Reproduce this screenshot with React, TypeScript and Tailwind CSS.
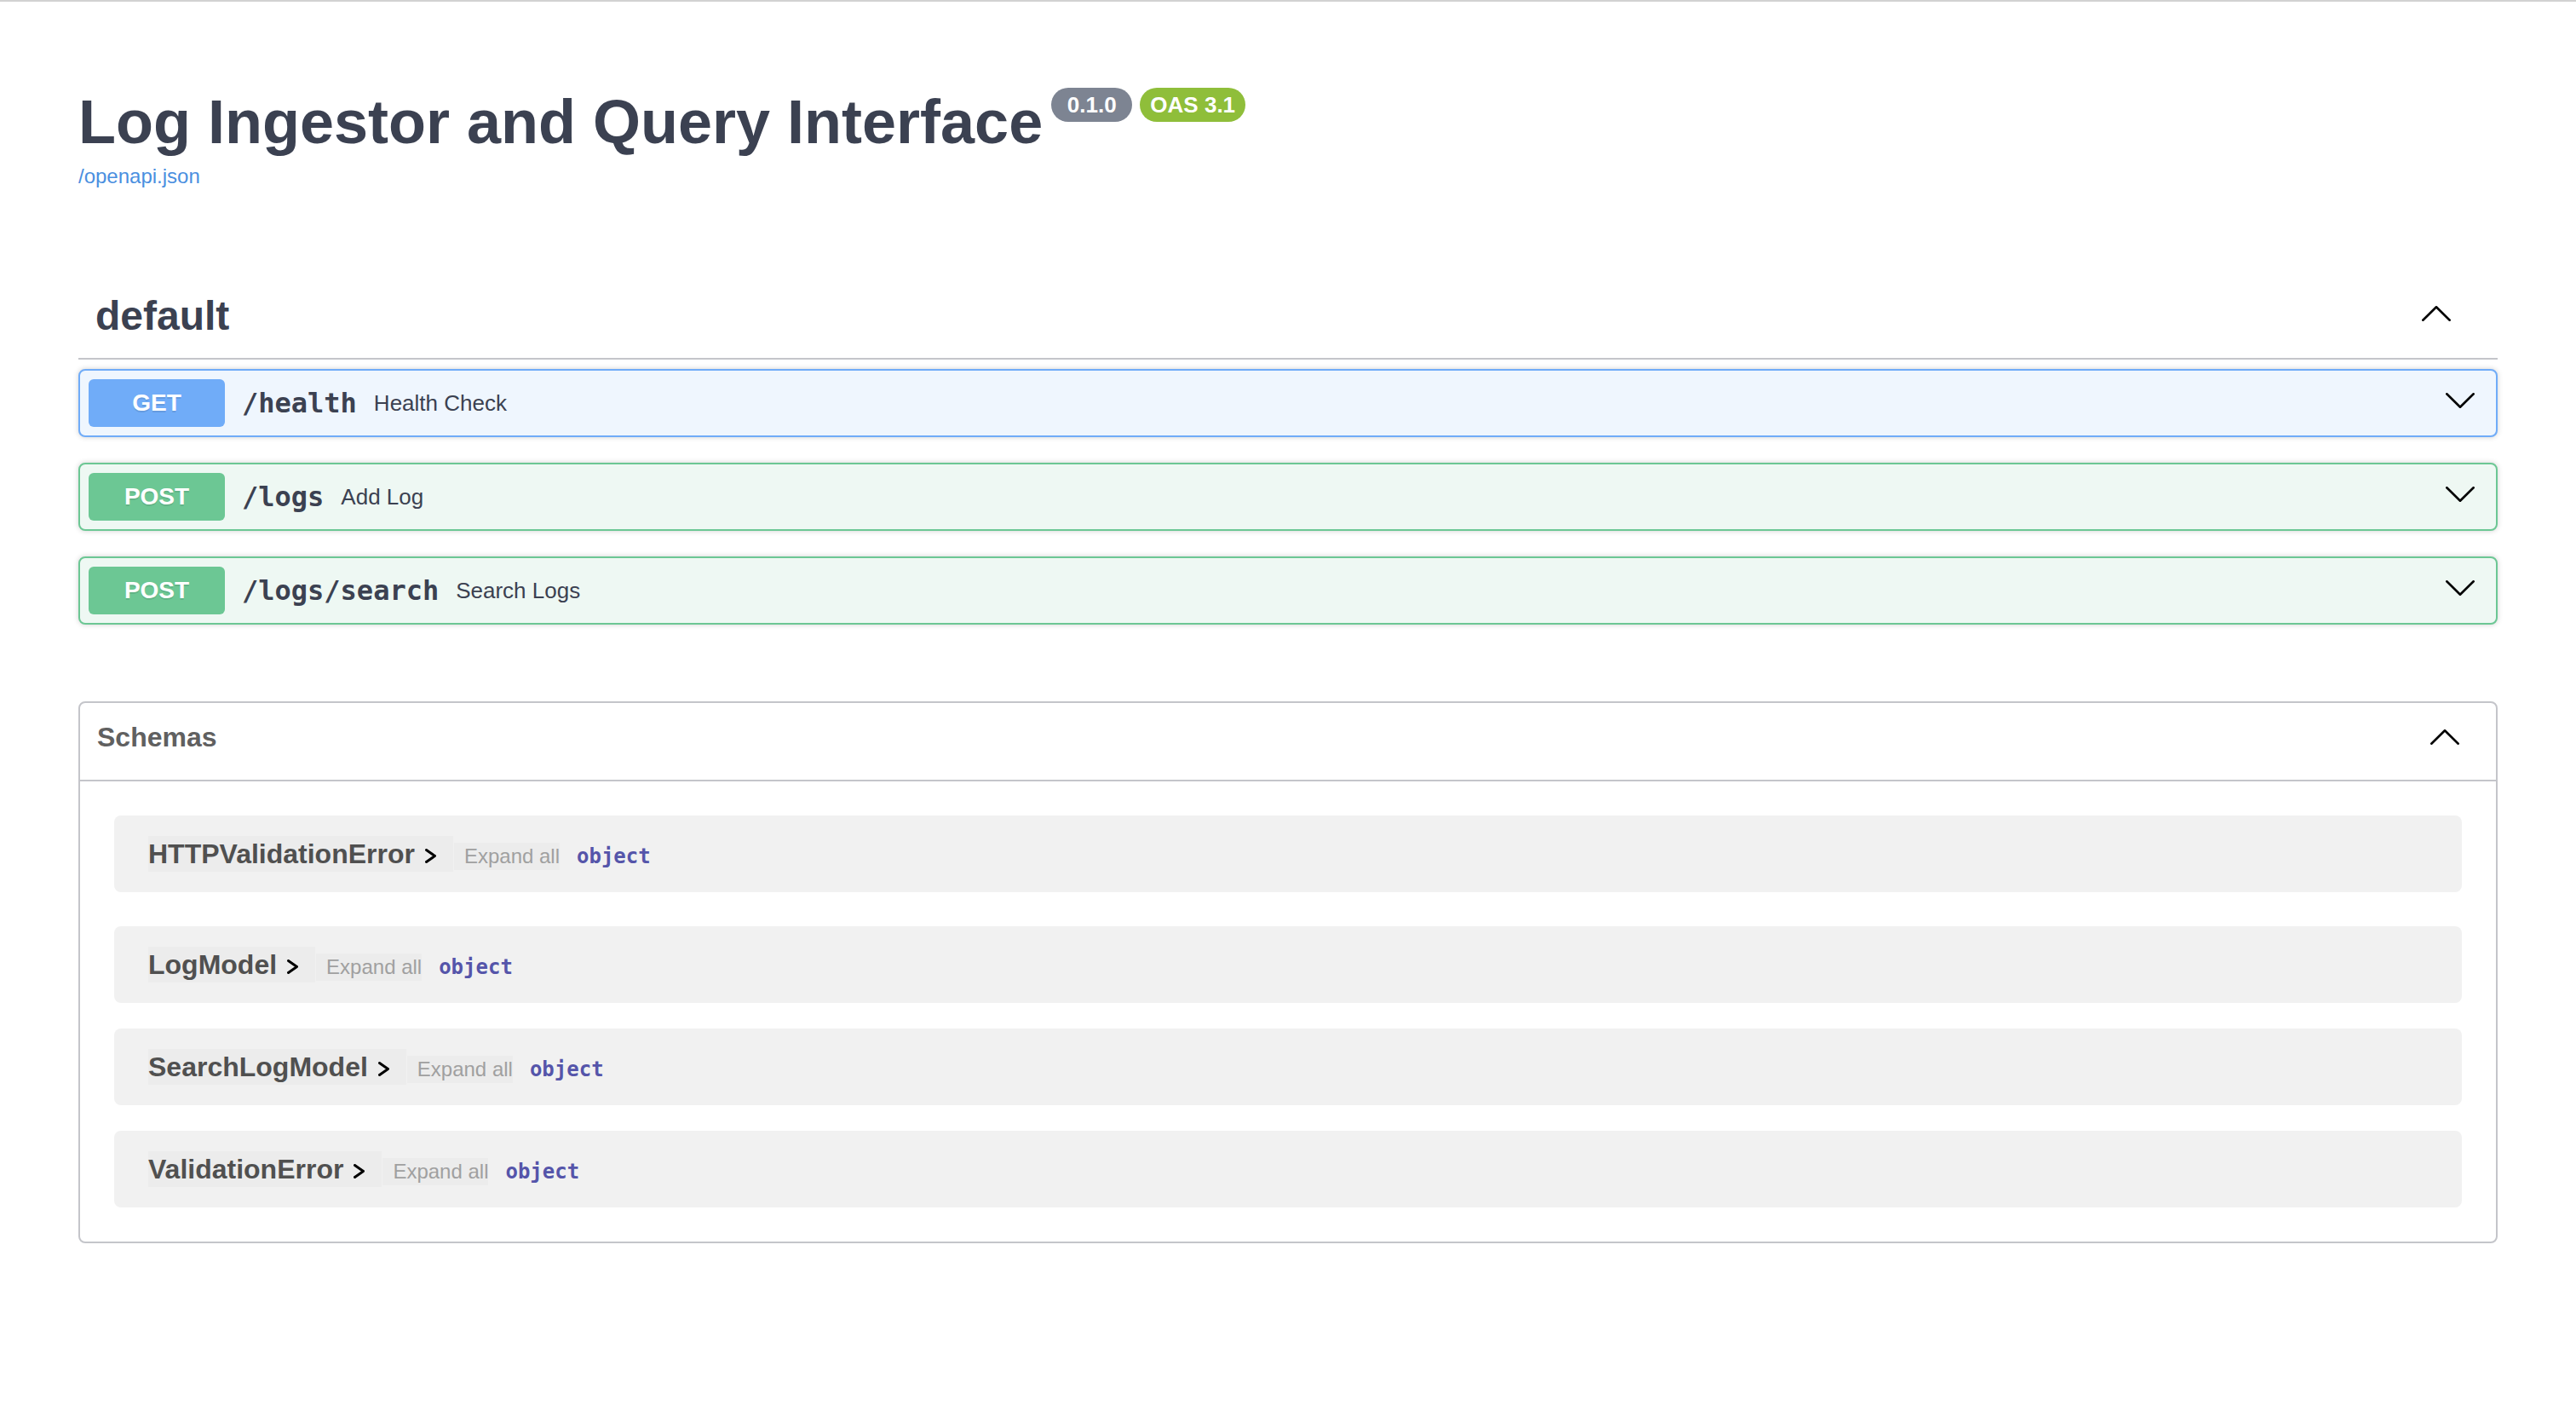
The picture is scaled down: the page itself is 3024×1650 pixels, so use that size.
import React from "react";

const sans = "font-['Liberation_Sans',Arial,sans-serif]";
const mono = "font-['DejaVu_Sans_Mono',Menlo,monospace]";

type ChevronProps = { w: number; h: number; dir: "up" | "down" | "right"; stroke?: number; className?: string };

const Chevron = ({ w, h, dir, stroke = 2.6, className = "" }: ChevronProps) => {
  const s = stroke / 2;
  const points =
    dir === "down"
      ? `${s},${s} ${w / 2},${h - s} ${w - s},${s}`
      : dir === "up"
      ? `${s},${h - s} ${w / 2},${s} ${w - s},${h - s}`
      : `${s},${s} ${w - s},${h / 2} ${s},${h - s}`;
  return (
    <svg width={w} height={h} viewBox={`0 0 ${w} ${h}`} className={`shrink-0 ${className}`}>
      <polyline points={points} fill="none" stroke="#000" strokeWidth={stroke} strokeLinecap="round" strokeLinejoin="round" />
    </svg>
  );
};

const Operation = ({ method, path, summary }: { method: string; path: string; summary: string }) => {
  const get = method === "GET";
  return (
    <div
      className={`mb-[30px] flex items-center rounded-[8px] border-2 p-[10px] shadow-[0_0_6px_rgba(0,0,0,0.19)] ${
        get ? "border-[#70acf8] bg-[#eff6fe]" : "border-[#6cc794] bg-[#eef8f3]"
      }`}
    >
      <span
        className={`w-[160px] rounded-[6px] py-[12px] text-center text-[28px] font-bold leading-[32px] text-white [text-shadow:0_2px_0_rgba(0,0,0,0.1)] ${
          get ? "bg-[#70acf8]" : "bg-[#6cc794]"
        }`}
      >
        {method}
      </span>
      <span className={`${mono} px-[20px] text-[32px] font-bold text-[#3b4151]`}>{path}</span>
      <span className="flex-1 text-[26px] text-[#3b4151]">{summary}</span>
      <Chevron dir="down" w={34} h={18} className="mb-[6px] mr-[15px]" />
    </div>
  );
};

const schemas = ["HTTPValidationError", "LogModel", "SearchLogModel", "ValidationError"];

const SchemaRow = ({ name, className }: { name: string; className: string }) => (
  <div className={`flex h-[90px] items-baseline rounded-[8px] bg-[#f1f1f1] pl-[40px] pt-[24px] ${className}`}>
    <span className="flex h-[42px] items-center bg-[#ececec] pr-[20px]">
      <span className="text-[32px] font-bold leading-[42px] text-[#505050]">{name}</span>
      <Chevron dir="right" w={13} h={17} stroke={3} className="ml-[12px] mt-[5px]" />
    </span>
    <span className="ml-[1px] h-[32px] bg-[#ececec] pl-[12px] text-[24px] leading-[32px] text-[#a0a0a0]">Expand all</span>
    <span className={`${mono} ml-[20px] text-[24px] font-bold text-[#5555aa]`}>object</span>
  </div>
);

export default function App() {
  return (
    <div className={`min-h-screen bg-white ${sans}`}>
      <div className="h-[2px] bg-[#d2d2d2]" />
      <div className="mx-auto w-[2920px] px-[40px] pb-[100px]">
        {/* info */}
        <div className="pt-[100px]">
          <div className="flex items-start">
            <h2 className="text-[72px] font-bold leading-[83px] text-[#3b4151]">Log Ingestor and Query Interface</h2>
            <span className="ml-[10px] mt-[1px] h-[40px] w-[95px] rounded-full bg-[#7d8492] text-center text-[26px] font-bold leading-[40px] text-white">
              0.1.0
            </span>
            <span className="ml-[9px] mt-[1px] h-[40px] w-[124px] rounded-full bg-[#8fbe3a] text-center text-[26px] font-bold leading-[40px] text-white">
              OAS 3.1
            </span>
          </div>
          <a href="#" className="mt-[8px] block w-fit text-[24px] leading-[28px] text-[#4a8fe0]">
            /openapi.json
          </a>
        </div>

        {/* default tag */}
        <section className="mt-[100px]">
          <div className="mb-[11px] flex h-[101px] items-center border-b-2 border-[#c4c5ca] pl-[20px] pr-[55px]">
            <h3 className="flex-1 text-[48px] font-bold leading-[55px] text-[#3b4151]">default</h3>
            <Chevron dir="up" w={34} h={18} className="mb-[5px]" />
          </div>
          <Operation method="GET" path="/health" summary="Health Check" />
          <Operation method="POST" path="/logs" summary="Add Log" />
          <Operation method="POST" path="/logs/search" summary="Search Logs" />
        </section>

        {/* schemas */}
        <section className="mt-[90px] rounded-[8px] border-2 border-[#c4c5ca]">
          <div className="flex h-[92px] items-start border-b-2 border-[#c4c5ca] pl-[20px] pr-[43px]">
            <h4 className="mt-[22px] flex-1 text-[32px] font-bold leading-[37px] text-[#606060]">Schemas</h4>
            <Chevron dir="up" w={34} h={18} className="mt-[31px]" />
          </div>
          <div className="px-[40px] pb-[40px] pt-[40px]">
            {schemas.map((s, i) => (
              <SchemaRow
                key={s}
                name={s}
                className={i === 0 ? "mb-[40px]" : i === schemas.length - 1 ? "" : "mb-[30px]"}
              />
            ))}
          </div>
        </section>
      </div>
    </div>
  );
}
